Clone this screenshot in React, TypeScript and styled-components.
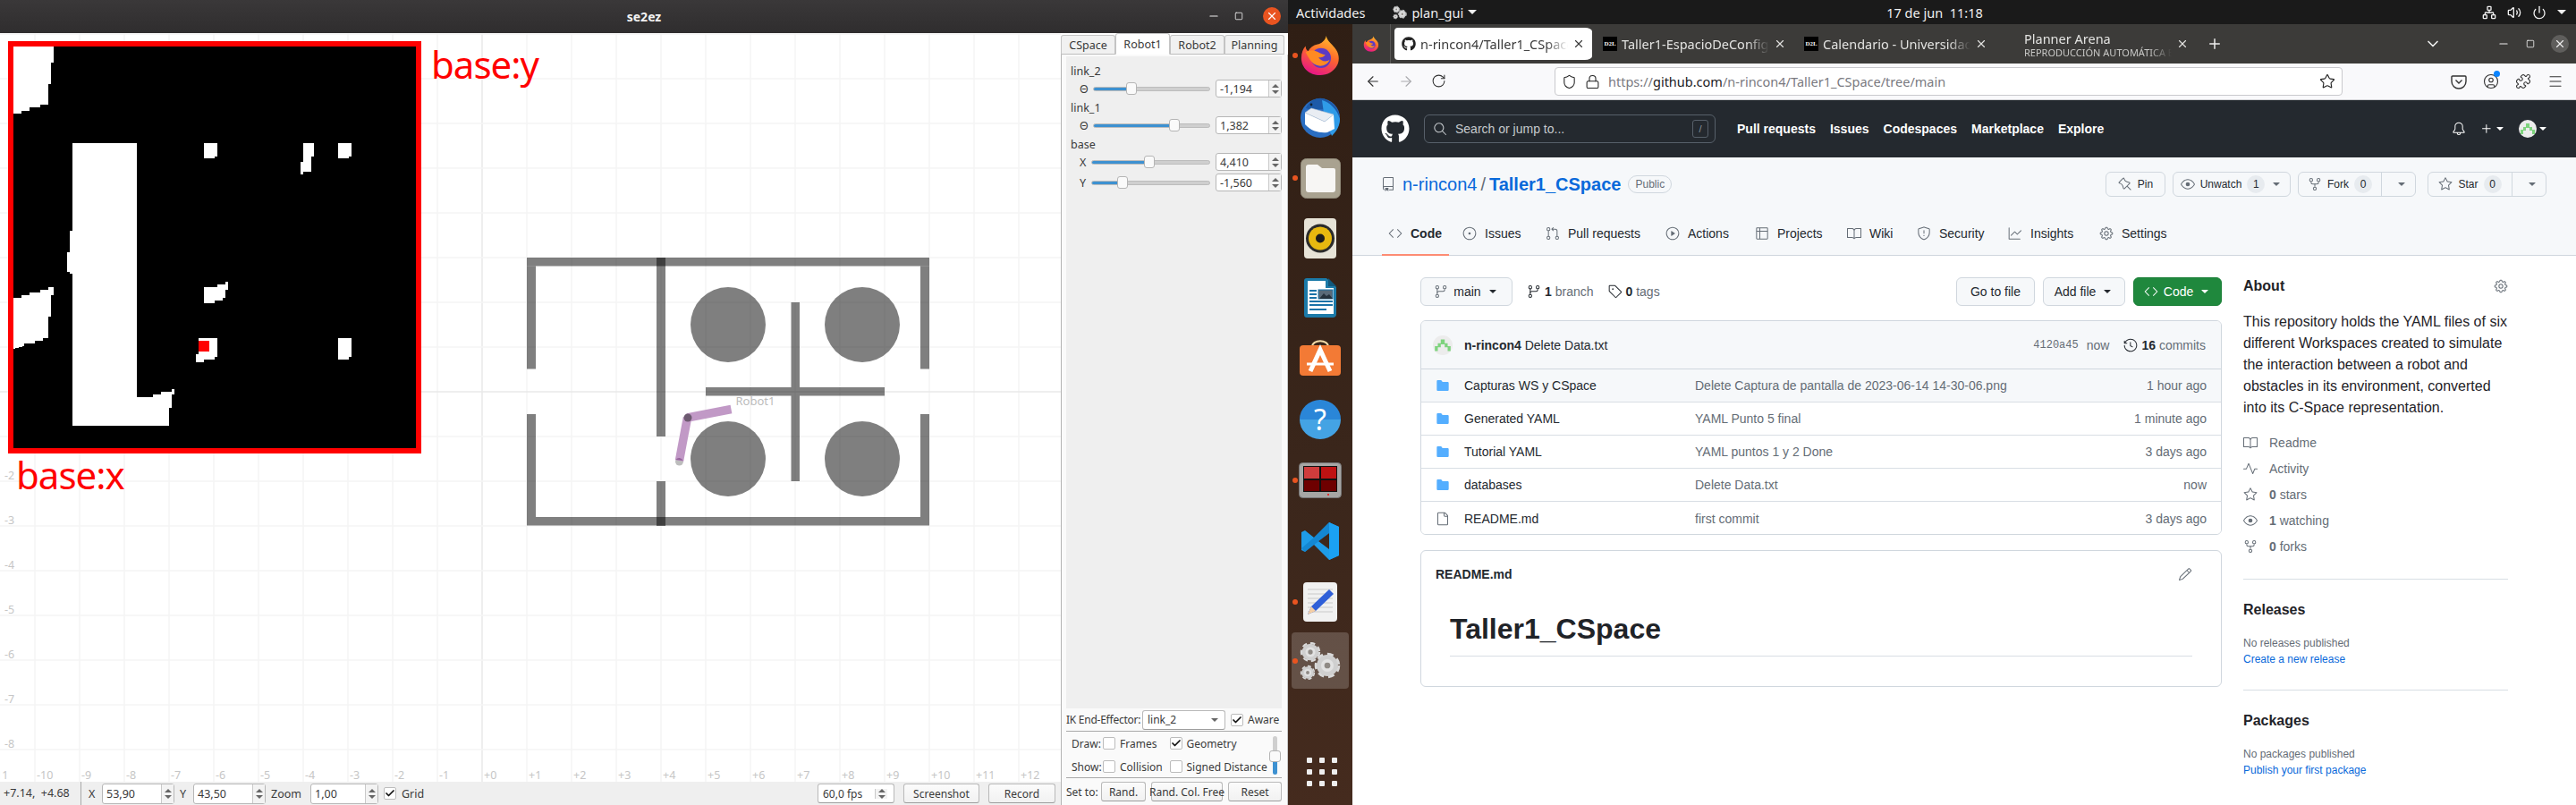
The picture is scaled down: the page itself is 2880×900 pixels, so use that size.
import React from "react";
import styled, { createGlobalStyle } from "styled-components";
import { FaGithub } from "react-icons/fa";
import {
  GoBell, GoBook, GoCode, GoEye, GoFile, GoFileDirectoryFill, GoGear, GoGitBranch, GoGitPullRequest,
  GoGraph, GoHistory, GoIssueOpened, GoPencil, GoPin, GoPlay, GoPlus, GoPulse, GoRepo,
  GoRepoForked, GoSearch, GoShield, GoStar, GoTable, GoTag, GoTriangleDown,
} from "react-icons/go";
import {
  ArrowLeft, ArrowRight, Check, ChevronDown, CircleUser, Lock, Menu, Minus, Network, Plus, Power, Puzzle,
  RotateCw, Shield, Square, Star, Volume2, X,
} from "lucide-react";

const UI = `"Noto Sans", "Open Sans", sans-serif`;
const GH = `"Liberation Sans", Arial, sans-serif`;

const Global = createGlobalStyle`
  * { box-sizing: border-box; }
  html, body { margin: 0; padding: 0; background: #fff; overflow: hidden; }
  #root { width: 2880px; height: 900px; }
`;

const Screen = styled.div`
  display: flex;
  width: 2880px;
  height: 900px;
  overflow: hidden;
`;

/* ---------- left window: se2ez ---------- */
const LeftWindow = styled.div`
  width: 1440px;
  height: 900px;
  display: flex;
  flex-direction: column;
  font-family: ${UI};
  color: #3a3a3a;
`;

const TitleBar = styled.div`
  position: relative;
  height: 37px;
  flex: none;
  display: flex;
  align-items: center;
  justify-content: center;
  background: linear-gradient(#3a3839, #2f2d2e);
  color: #f2f2f2;
  font-size: 14px;
  font-weight: 700;
`;

const WinButtons = styled.div`
  position: absolute;
  right: 8px;
  top: 8px;
  display: flex;
  align-items: center;
  gap: 16px;
  color: #eee;
`;

const CloseDot = styled.span`
  width: 20px;
  height: 20px;
  border-radius: 50%;
  background: #e95420;
  color: #fff;
  display: flex;
  align-items: center;
  justify-content: center;
  margin-left: 6px;
`;

const WindowBody = styled.div`
  flex: 1;
  display: flex;
  min-height: 0;
`;

const ViewColumn = styled.div`
  width: 1186px;
  flex: none;
  display: flex;
  flex-direction: column;
`;

const Canvas = styled.div`
  position: relative;
  height: 837px;
  background: #fff;
  overflow: hidden;
`;

const CanvasSvg = styled.svg`
  display: block;
  width: 1186px;
  height: 837px;
`;

const CSpaceFrame = styled.div`
  position: absolute;
  left: 9px;
  top: 9px;
  width: 462px;
  height: 461px;
  border: 6px solid #ff0000;
  background: #000;
`;

const CSpaceSvg = styled.svg`
  display: block;
  width: 450px;
  height: 449px;
`;

const AxisNote = styled.span<{ $x: number; $y: number }>`
  position: absolute;
  left: ${(p) => p.$x}px;
  top: ${(p) => p.$y}px;
  color: #ff0000;
  font-size: 42px;
  line-height: 48px;
  letter-spacing: -1px;
`;

const Toolbar = styled.div`
  height: 26px;
  flex: none;
  display: flex;
  align-items: center;
  gap: 6px;
  padding: 0 6px 0 4px;
  background: #efefef;
  font-size: 12.5px;
`;

const CoordText = styled.div`
  width: 87px;
  height: 26px;
  line-height: 25px;
  overflow: hidden;
  white-space: nowrap;
  border-right: 1px solid #a8a8a8;
  margin-right: 2px;
`;

const ToolLabel = styled.span<{ $w?: number }>`
  ${(p) => (p.$w ? `width: ${p.$w}px;` : "")}
  white-space: nowrap;
`;

const Spin = styled.div<{ $w: number; $h: number }>`
  width: ${(p) => p.$w}px;
  height: ${(p) => p.$h}px;
  flex: none;
  display: flex;
  background: #fff;
  border: 1px solid #b7b7b7;
  border-radius: 3px;
  font-size: 12.5px;
`;

const SpinValue = styled.div`
  flex: 1;
  display: flex;
  align-items: center;
  padding-left: 4px;
`;

const SpinArrows = styled.div`
  width: 14px;
  flex: none;
  display: flex;
  flex-direction: column;
  align-items: center;
  justify-content: center;
  gap: 3px;
  border-left: 1px solid #c9c9c9;
  background: #f3f3f3;
`;

const Arrow = styled.i<{ $down?: boolean }>`
  width: 0;
  height: 0;
  border-left: 4px solid transparent;
  border-right: 4px solid transparent;
  ${(p) => (p.$down ? "border-top: 4px solid #666;" : "border-bottom: 4px solid #666;")}
`;

const CheckBox = styled.span<{ $on?: boolean }>`
  width: 14px;
  height: 14px;
  flex: none;
  display: inline-flex;
  align-items: center;
  justify-content: center;
  background: #fff;
  border: 1px solid #bcbcbc;
  border-radius: 2px;
  color: #111;
`;

const ToolGroup = styled.div`
  margin-left: auto;
  display: flex;
  align-items: center;
  gap: 10px;
`;

const QtButton = styled.div<{ $w: number }>`
  width: ${(p) => p.$w}px;
  height: 22px;
  flex: none;
  display: flex;
  align-items: center;
  justify-content: center;
  white-space: nowrap;
  background: linear-gradient(#fbfbfb, #f1f1f1);
  border: 1px solid #b9b9b9;
  border-bottom-color: #9d9d9d;
  border-radius: 3px;
  font-size: 12px;
`;

const QtSelect = styled(QtButton)`
  justify-content: space-between;
  padding: 0 7px 0 5px;
  background: #fff;
`;

/* side panel */
const Panel = styled.div`
  width: 254px;
  flex: none;
  display: flex;
  flex-direction: column;
  background: #fafafa;
`;

const PanelTabs = styled.div`
  height: 24px;
  flex: none;
  display: flex;
  align-items: flex-end;
  background: #fff;
`;

const PanelTab = styled.div<{ $w: number; $on?: boolean }>`
  width: ${(p) => p.$w}px;
  height: ${(p) => (p.$on ? 24 : 22)}px;
  display: flex;
  align-items: center;
  justify-content: center;
  font-size: 12.5px;
  background: ${(p) => (p.$on ? "#fff" : "#f1f1f1")};
  border: 1px solid #c4c4c4;
  border-bottom-color: ${(p) => (p.$on ? "#fff" : "#bdbdbd")};
  border-radius: 3px 3px 0 0;
`;

const PanelBody = styled.div`
  flex: 1;
  display: flex;
  flex-direction: column;
  border-left: 1px solid #b4b4b4;
  border-right: 1px solid #c8c8c8;
  padding: 2px 6px 0 5px;
  font-size: 12px;
`;

const SliderArea = styled.div`
  height: 729px;
  flex: none;
  background: #efefef;
  padding-top: 7px;
  font-size: 12.5px;
`;

const GroupLabel = styled.div<{ $mt?: number }>`
  height: 19px;
  line-height: 19px;
  padding-left: 5px;
  margin-top: ${(p) => p.$mt ?? 0}px;
`;

const JointRow = styled.div<{ $mt?: number }>`
  display: flex;
  align-items: center;
  height: 20px;
  margin-top: ${(p) => p.$mt ?? 0}px;
`;

const AxisLabel = styled.span<{ $w: number }>`
  width: ${(p) => p.$w}px;
  flex: none;
  padding-left: 15px;
`;

const Track = styled.div`
  position: relative;
  flex: 1;
  height: 5px;
  margin-right: 6px;
  background: #cfcfcf;
  border: 1px solid #bcbcbc;
  border-radius: 3px;
`;

const TrackFill = styled.div`
  height: 100%;
  background: #3d91d1;
  border-radius: 3px 0 0 3px;
`;

const Thumb = styled.div`
  position: absolute;
  top: -6px;
  width: 12px;
  height: 14px;
  margin-left: -6px;
  background: #fafafa;
  border: 1px solid #b5b5b5;
  border-radius: 3px;
`;

const IkRow = styled.div`
  height: 26px;
  flex: none;
  display: flex;
  align-items: center;
  gap: 6px;
  border-bottom: 1px solid #a9a9a9;
`;

const IkLabel = styled.span`
  width: 79px;
  white-space: nowrap;
  letter-spacing: -0.25px;
`;

const DrawPart = styled.div`
  height: 52px;
  flex: none;
  display: flex;
  border-bottom: 1px solid #a9a9a9;
`;

const DrawGrid = styled.div`
  flex: 1;
  display: grid;
  grid-template-columns: 35px 74.5px 1fr;
  grid-auto-rows: 26px;
  align-items: center;
  padding-left: 6px;
`;

const CheckField = styled.label`
  display: flex;
  align-items: center;
  gap: 5px;
  white-space: nowrap;
`;

const VSlider = styled.div`
  position: relative;
  width: 13px;
  flex: none;
  margin: 5px 1px 3px 0;
  display: flex;
  justify-content: center;
`;

const VTrack = styled.div`
  width: 5px;
  height: 100%;
  background: linear-gradient(#cfcfcf 0 40%, #3d91d1 40%);
  border-radius: 3px;
`;

const VThumb = styled.div`
  position: absolute;
  top: 16px;
  left: 0;
  width: 13px;
  height: 13px;
  background: #fafafa;
  border: 1px solid #b5b5b5;
  border-radius: 3px;
`;

const SetRow = styled.div`
  flex: 1;
  display: flex;
  align-items: center;
  gap: 6px;
`;

const SetLabel = styled.span`
  width: 33px;
  white-space: nowrap;
`;

/* ---------- right: desktop ---------- */
const Desktop = styled.div`
  width: 1440px;
  height: 900px;
  display: flex;
  flex-direction: column;
`;

const TopBar = styled.div`
  height: 27px;
  flex: none;
  display: grid;
  grid-template-columns: 1fr auto 1fr;
  align-items: center;
  padding: 0 11px 0 9px;
  background: #1a1a1a;
  color: #f0f0f0;
  font: 14.5px ${UI};
`;

const TopLeft = styled.div`
  display: flex;
  align-items: center;
  gap: 4px;
`;

const TopApp = styled.div`
  display: flex;
  align-items: center;
  gap: 5px;
  margin-left: 27px;
`;

const TopCaret = styled.i`
  width: 0;
  height: 0;
  border-left: 5px solid transparent;
  border-right: 5px solid transparent;
  border-top: 5px solid #f0f0f0;
`;

const TopClock = styled.div`
  margin-left: 8px;
`;

const TopRight = styled.div`
  display: flex;
  align-items: center;
  justify-content: flex-end;
  gap: 12px;
`;

const DesktopBody = styled.div`
  flex: 1;
  display: flex;
  min-height: 0;
`;

const Dock = styled.div`
  position: relative;
  width: 72px;
  flex: none;
  display: flex;
  flex-direction: column;
  align-items: center;
  background: linear-gradient(170deg, #2f1e14, #3a261b 55%, #452b1e);
`;

const DockSlot = styled.div<{ $h: number; $active?: boolean; $running?: boolean }>`
  position: relative;
  width: 64px;
  height: ${(p) => p.$h}px;
  flex: none;
  display: flex;
  align-items: center;
  justify-content: center;
  border-radius: 4px;
  background: ${(p) => (p.$active ? "rgba(255,255,255,.19)" : "transparent")};

  &::before {
    content: "";
    display: ${(p) => (p.$running ? "block" : "none")};
    position: absolute;
    left: 1px;
    top: calc(50% - 3px);
    width: 6px;
    height: 6px;
    border-radius: 50%;
    background: #e95420;
  }
`;

const AppGrid = styled.div`
  position: absolute;
  bottom: 21px;
  left: 21px;
  display: grid;
  grid-template-columns: repeat(3, 6px);
  grid-auto-rows: 6px;
  gap: 7px 8px;

  i {
    background: #eee;
    border-radius: 1px;
  }
`;

const Browser = styled.div`
  flex: 1;
  display: flex;
  flex-direction: column;
  min-width: 0;
  background: #fff;
  font-family: ${GH};
`;

const TabStrip = styled.div`
  height: 44px;
  flex: none;
  display: flex;
  align-items: stretch;
  background: #3c3b39;
  color: #e2e2e0;
  font-family: ${UI};
`;

const FoxCell = styled.div`
  width: 43px;
  flex: none;
  display: flex;
  align-items: center;
  justify-content: center;
  border-right: 1px solid #5a5957;
`;

const Tab = styled.div<{ $on?: boolean }>`
  width: 225px;
  flex: none;
  display: flex;
  align-items: center;
  gap: 5px;
  padding: 0 8px 0 8px;
  border: solid transparent;
  border-width: 4px 0 4px 4px;
  background-clip: padding-box;
  background-color: ${(p) => (p.$on ? "#fff" : "transparent")};
  color: ${(p) => (p.$on ? "#3a3a3a" : "#e2e2e0")};
  border-radius: 8px;
  font-size: 14.5px;
`;

const TabIcon = styled.span`
  width: 16px;
  height: 16px;
  flex: none;
  display: flex;
  align-items: center;
  justify-content: center;
`;

const D2L = styled.span`
  width: 16px;
  height: 16px;
  background: #000;
  color: #fff;
  font: 700 7px "Liberation Serif", serif;
  line-height: 16px;
  text-align: center;
  white-space: nowrap;
  overflow: hidden;
`;

const TabTitle = styled.div`
  flex: 1;
  min-width: 0;
  white-space: nowrap;
  overflow: hidden;
  mask-image: linear-gradient(to right, #000 85%, transparent);
`;

const TabSub = styled.div`
  font-size: 11px;
  line-height: 13px;
  color: #c8c8c6;
`;

const TabMain = styled.div`
  line-height: 18px;
`;

const StripRight = styled.div`
  flex: 1;
  display: flex;
  align-items: center;
  padding-left: 12px;
  color: #eee;
`;

const StripControls = styled.div`
  margin-left: auto;
  display: flex;
  align-items: center;
  padding-right: 8px;
  gap: 18px;
`;

const Chevron = styled.span`
  display: flex;
  margin-right: 44px;
`;

const BrowserClose = styled.span`
  width: 20px;
  height: 20px;
  border-radius: 50%;
  background: #5f5e5c;
  display: flex;
  align-items: center;
  justify-content: center;
`;

const NavBar = styled.div`
  height: 41px;
  flex: none;
  display: flex;
  align-items: center;
  padding-left: 14px;
  background: #f9f9fb;
  border-bottom: 1px solid #cfcfd3;
  color: #333;
`;

const NavIcon = styled.span<{ $faded?: boolean }>`
  position: relative;
  width: 18px;
  height: 18px;
  display: flex;
  color: ${(p) => (p.$faded ? "#a9a9ad" : "#333")};
`;

const NavButtons = styled.div`
  display: flex;
  gap: 19px;
`;

const AddressBar = styled.div`
  width: 881px;
  height: 32px;
  margin-left: 120px;
  display: flex;
  align-items: center;
  gap: 9px;
  padding: 0 7px 0 7px;
  background: #fff;
  border: 1px solid #c9c9cd;
  border-radius: 4px;
  font: 14.5px ${UI};
  color: #7a7a7f;
`;

const UrlText = styled.div`
  flex: 1;
  white-space: nowrap;
  b {
    font-weight: 400;
    color: #1b1b1d;
  }
`;

const NavRight = styled(NavButtons)`
  margin-left: 121px;
  gap: 18px;
`;

const BlueBadge = styled.span`
  position: absolute;
  right: -1px;
  top: -3px;
  width: 7px;
  height: 7px;
  border-radius: 50%;
  background: #0a84ff;
`;

const GhHeader = styled.div`
  height: 64px;
  flex: none;
  display: flex;
  align-items: center;
  padding: 0 30px 0 32px;
  background: #24292f;
  color: #fff;
  font-size: 14px;
`;

const SearchBox = styled.div`
  width: 326px;
  height: 32px;
  margin-left: 16px;
  display: flex;
  align-items: center;
  gap: 9px;
  padding: 0 7px 0 9px;
  border: 1px solid #57606a;
  border-radius: 6px;
  color: #c5c9cd;
`;

const SearchText = styled.span`
  flex: 1;
`;

const SlashKey = styled.span`
  width: 18px;
  height: 20px;
  display: flex;
  align-items: center;
  justify-content: center;
  border: 1px solid #57606a;
  border-radius: 3px;
  font-size: 11px;
  color: #8b949e;
`;

const GhLinks = styled.nav`
  display: flex;
  gap: 16px;
  margin-left: 24px;
  font-weight: 700;
`;

const GhRight = styled.div`
  margin-left: auto;
  display: flex;
  align-items: center;
`;

const HeaderPlus = styled.span`
  display: flex;
  align-items: center;
  margin: 0 0 0 15px;
`;

const HeaderAvatar = styled.span`
  display: flex;
  align-items: center;
  margin-left: 14px;
`;

const RepoHead = styled.div`
  height: 110px;
  flex: none;
  padding: 16px 33px 0 32px;
  background: #f6f8fa;
  border-bottom: 1px solid #d0d7de;
`;

const RepoTitle = styled.div`
  display: flex;
  align-items: center;
  height: 28px;
  font-size: 20px;
  color: #0969da;
`;

const RepoBook = styled.span`
  display: flex;
  color: #656d76;
  margin-right: 8px;
`;

const Slash = styled.span`
  color: #656d76;
  margin: 0 4px;
`;

const PublicBadge = styled.span`
  margin-left: 8px;
  padding: 0 7px;
  height: 20px;
  line-height: 18px;
  border: 1px solid #d0d7de;
  border-radius: 10px;
  font-size: 12px;
  color: #656d76;
`;

const RepoActions = styled.div`
  margin-left: auto;
  display: flex;
  gap: 8px;
  color: #24292f;
  font-size: 12px;
`;

const ActionBtn = styled.div<{ $w: number; $ml?: number }>`
  width: ${(p) => p.$w}px;
  height: 28px;
  margin-left: ${(p) => p.$ml ?? 0}px;
  display: flex;
  align-items: center;
  justify-content: center;
  gap: 6px;
  background: #f6f8fa;
  border: 1px solid #d0d7de;
  border-radius: 6px;
  color: #24292f;

  svg {
    color: #656d76;
  }
`;

const SplitMain = styled.div`
  flex: 1;
  display: flex;
  align-items: center;
  justify-content: center;
  gap: 6px;
  height: 100%;
  border-right: 1px solid #d0d7de;
`;

const SplitCaret = styled.div`
  width: 31px;
  display: flex;
  align-items: center;
  justify-content: center;
`;

const Counter = styled.span`
  min-width: 20px;
  height: 20px;
  padding: 0 6px;
  display: inline-flex;
  align-items: center;
  justify-content: center;
  border-radius: 10px;
  background: #e7ebef;
`;

const RepoTabs = styled.nav`
  display: flex;
  margin: 17px 0 0 0;
  height: 48px;
  color: #24292f;
  font-size: 14px;
`;

const RepoTab = styled.div<{ $w: number; $on?: boolean }>`
  position: relative;
  width: ${(p) => p.$w}px;
  flex: none;
  display: flex;
  align-items: center;
  gap: 9px;
  padding-left: 8px;
  font-weight: ${(p) => (p.$on ? 700 : 400)};

  svg {
    color: #656d76;
  }

  &::after {
    content: "";
    display: ${(p) => (p.$on ? "block" : "none")};
    position: absolute;
    left: 1px;
    bottom: -1px;
    width: 75px;
    height: 2px;
    background: #fd8c73;
  }
`;

const RepoBody = styled.div`
  flex: 1;
  display: flex;
  padding: 24px 0 0 76px;
  color: #24292f;
  font-size: 14px;
`;

const MainCol = styled.div`
  width: 896px;
  flex: none;
`;

const FileNav = styled.div`
  display: flex;
  align-items: center;
  height: 32px;
`;

const NavBtn = styled.div<{ $w: number; $green?: boolean }>`
  width: ${(p) => p.$w}px;
  height: 32px;
  flex: none;
  display: flex;
  align-items: center;
  justify-content: center;
  gap: 6px;
  border: 1px solid ${(p) => (p.$green ? "#1a7f37" : "#d0d7de")};
  border-radius: 6px;
  background: ${(p) => (p.$green ? "#1f883d" : "#f6f8fa")};
  color: ${(p) => (p.$green ? "#fff" : "#24292f")};
  font-weight: 400;
`;

const MutedIcon = styled.span`
  display: flex;
  color: #656d76;
`;

const NavCount = styled.span<{ $ml: number }>`
  display: flex;
  align-items: center;
  gap: 4px;
  margin-left: ${(p) => p.$ml}px;
  color: #656d76;

  b {
    color: #24292f;
  }
  svg {
    color: #24292f;
  }
`;

const NavEnd = styled.div`
  margin-left: auto;
  display: flex;
  gap: 9px;
`;

const FileBox = styled.div`
  margin-top: 16px;
  height: 240px;
  border: 1px solid #d0d7de;
  border-radius: 6px;
  overflow: hidden;
`;

const CommitRow = styled.div`
  height: 54px;
  display: flex;
  align-items: center;
  padding: 0 17px 0 13px;
  background: #f6f8fa;
  border-bottom: 1px solid #d0d7de;
`;

const CommitText = styled.div`
  margin-left: 13px;
  b {
    font-weight: 700;
  }
`;

const CommitMeta = styled.div`
  margin-left: auto;
  display: flex;
  align-items: center;
  color: #656d76;
  font: 12px "Liberation Mono", monospace;
`;

const CommitSum = styled.span`
  margin-left: 9px;
  font: 14px ${GH};
`;

const Commits = styled.span`
  display: flex;
  align-items: center;
  gap: 4px;
  margin-left: 16px;
  font: 14px ${GH};

  b {
    color: #24292f;
  }
  svg {
    color: #24292f;
  }
`;

const FileRow = styled.div<{ $hover?: boolean }>`
  height: 37px;
  display: flex;
  align-items: center;
  padding: 0 16px;
  background: ${(p) => (p.$hover ? "#f6f8fa" : "#fff")};
  border-bottom: 1px solid #d8dee4;

  &:last-child {
    border-bottom: 0;
  }
`;

const FileIcon = styled.span<{ $dir?: boolean }>`
  width: 32px;
  flex: none;
  display: flex;
  color: ${(p) => (p.$dir ? "#54aeff" : "#656d76")};
`;

const FileName = styled.span`
  width: 258px;
  flex: none;
`;

const FileMsg = styled.span`
  flex: 1;
  color: #656d76;
`;

const FileAge = styled.span`
  color: #656d76;
`;

const ReadmeBox = styled.div`
  margin-top: 17px;
  height: 153px;
  padding: 0 32px;
  border: 1px solid #d0d7de;
  border-radius: 6px;
`;

const ReadmeHead = styled.div`
  height: 52px;
  display: flex;
  align-items: center;
  justify-content: space-between;
  margin: 0 0 0 -16px;
  font-weight: 700;

  svg {
    color: #656d76;
  }
`;

const ReadmeTitle = styled.h1`
  margin: 14px 0 0;
  height: 52px;
  line-height: 42px;
  font-size: 32px;
  font-weight: 700;
  color: #1f2328;
  border-bottom: 1px solid #d8dee4;
`;

const SideCol = styled.aside`
  width: 296px;
  flex: none;
  margin-left: 24px;
`;

const SideHeadRow = styled.div`
  display: flex;
  justify-content: space-between;
  align-items: center;
  color: #656d76;
`;

const SideTitle = styled.h2<{ $mt?: number }>`
  margin: ${(p) => p.$mt ?? 0}px 0 0;
  font-size: 16px;
  line-height: 20px;
  font-weight: 700;
  color: #1f2328;
`;

const AboutText = styled.p`
  margin: 18px 0 0;
  font-size: 16px;
  line-height: 24px;
  color: #1f2328;
`;

const MetaList = styled.div`
  margin-top: 12.5px;
  color: #656d76;
`;

const MetaRow = styled.div`
  height: 29px;
  display: flex;
  align-items: center;
  gap: 13px;

  b {
    font-weight: 700;
  }
`;

const MetaIcon = styled.span`
  width: 16px;
  display: flex;
`;

const SideRule = styled.hr<{ $mt: number }>`
  margin: ${(p) => p.$mt}px 0 0;
  border: 0;
  border-top: 1px solid #d8dee4;
`;

const SideNote = styled.div<{ $mt?: number }>`
  margin-top: ${(p) => p.$mt ?? 0}px;
  font-size: 12px;
  line-height: 16px;
  color: #656d76;
`;

const SideLink = styled.div`
  margin-top: 1px;
  font-size: 12px;
  line-height: 18px;
  color: #0969da;
`;

/* ---------- drawings ---------- */
const Firefox = ({ size = 46 }: { size?: number }) => (
  <svg width={size} height={size} viewBox="0 0 48 48">
    <defs>
      <linearGradient id={`ff${size}`} x1="0.7" y1="0" x2="0.3" y2="1">
        <stop offset="0" stopColor="#ffbd2e" />
        <stop offset="0.45" stopColor="#ff6a2b" />
        <stop offset="1" stopColor="#e5128a" />
      </linearGradient>
    </defs>
    <path d="M31 1c1 6 6 9 10 14 5 6 6 14 3 20-4 8-12 12-20 12C11 47 2 38 2 27c0-6 2-11 5-14 0 3 1 5 3 6 2-4 6-7 11-8 4-1 9-4 10-10z" fill={`url(#ff${size})`} />
    <circle cx="25" cy="27" r="11.5" fill="#5b3bc4" />
    <path d="M7 20c4-2 8-3 12-1 4 1 6 4 11 4-2 3-5 4-8 3 3 5 9 6 13 3-2 6-10 9-16 6-6-3-9-9-12-15z" fill="#ff8a22" />
  </svg>
);

const Thunderbird = () => (
  <svg width="48" height="48" viewBox="0 0 48 48">
    <circle cx="24" cy="25" r="22" fill="#2a6ec2" />
    <path d="M8 14C12 4 24 0 32 5c8 4 14 13 14 20-6-6-14-10-22-10-6 0-11 1-16-1z" fill="#1d5aa8" />
    <path d="M26 5c8 2 17 10 20 21 0 8-4 14-9 19-1-3-3-8-7-11z" fill="#2f9be8" />
    <path d="M7 19l22 10 10-8 1 16-8 4c-8 1-18-1-25-9z" fill="#fff" />
    <path d="M7 19l7-5 25 7-10 8z" fill="#e9edf3" stroke="#b8c4d4" strokeWidth="0.6" />
    <circle cx="14" cy="10" r="1.4" fill="#123" />
  </svg>
);

const FilesIcon = () => (
  <svg width="45" height="45" viewBox="0 0 45 45">
    <rect x="0.5" y="0.5" width="44" height="44" rx="6" fill="#a9a290" stroke="#8f8978" />
    <path d="M6 10a3 3 0 0 1 3-3h10l5 4h13a2 2 0 0 1 2 2v22a3 3 0 0 1-3 3H9a3 3 0 0 1-3-3z" fill="#f7f6f4" />
  </svg>
);

const SpeakerIcon = () => (
  <svg width="36" height="45" viewBox="0 0 36 45">
    <rect x="0" y="0" width="36" height="45" rx="4" fill="#e7e3d7" />
    <circle cx="18" cy="22.5" r="16" fill="#2b2b2b" />
    <circle cx="18" cy="22.5" r="13" fill="#e7b80f" />
    <circle cx="18" cy="22.5" r="5" fill="#1c1c1c" />
  </svg>
);

const WriterIcon = () => (
  <svg width="38" height="46" viewBox="0 0 38 46">
    <path d="M4 1h22l11 10v30a4 4 0 0 1-4 4H4a3 3 0 0 1-3-3V4a3 3 0 0 1 3-3z" fill="#1b7aa8" />
    <path d="M5 4h20v8h9v29H5z" fill="#fff" />
    <path d="M28 1l9 9h-9z" fill="#11587c" />
    <path d="M7 15h8M7 19h8M7 23h8M7 27h26M7 31h26M7 36h19" stroke="#1a73a8" strokeWidth="2" />
    <rect x="17" y="14" width="16" height="10" fill="#5a6a78" stroke="#1a73a8" />
    <path d="M18 24l5-6 3 3 3-2 4 5z" fill="#26323c" />
  </svg>
);

const StoreIcon = () => (
  <svg width="46" height="40" viewBox="0 0 46 40">
    <path d="M14 8c0-9 18-9 18 0" fill="none" stroke="#f1d9a6" strokeWidth="2" />
    <rect x="0" y="6" width="46" height="34" rx="4" fill="#f37a35" />
    <path d="M12 35L23 11l11 24" fill="none" stroke="#fff" strokeWidth="5" />
    <path d="M8 27h30" stroke="#fff" strokeWidth="3" />
  </svg>
);

const HelpCircle = styled.div`
  width: 46px;
  height: 44px;
  border-radius: 50%;
  background: linear-gradient(#2a86d8 50%, #44a3e4 50%);
  color: #fff;
  font: 32px ${UI};
  line-height: 44px;
  text-align: center;
`;

const MonitorIcon = () => (
  <svg width="48" height="40" viewBox="0 0 48 40">
    <rect x="0.5" y="0.5" width="47" height="39" rx="4" fill="#a6a6a4" stroke="#777" />
    <rect x="5" y="4" width="38" height="29" fill="#111" />
    <rect x="6" y="5" width="17" height="13" fill="#cf3c3c" />
    <rect x="25" y="5" width="17" height="13" fill="#bf1212" />
    <rect x="6" y="20" width="17" height="12" fill="#6e0000" />
    <rect x="25" y="20" width="17" height="12" fill="#6e0000" />
    <rect x="32" y="35" width="2" height="2" fill="#d33" />
  </svg>
);

const VsCodeIcon = () => (
  <svg width="44" height="44" viewBox="0 0 44 44">
    <path d="M32 1L15 18 5 10 1 12v20l4 2 10-8 17 17 11-5V6zM32 13v18L20 22z" fill="#1e9ce8" fillRule="evenodd" />
    <path d="M32 1l11 5v32l-11 5z" fill="#1ba1f2" />
    <path d="M1 30l4 4L32 13V1L15 18z" fill="#0c77bf" opacity=".55" />
  </svg>
);

const EditorIcon = () => (
  <svg width="38" height="44" viewBox="0 0 38 44">
    <rect x="0" y="0" width="38" height="44" rx="4" fill="#f1f1f1" />
    <path d="M5 8h28M5 13h28M5 18h28M5 23h28M5 28h28M5 33h28" stroke="#c9c9c9" strokeWidth="1" />
    <path d="M5 36l4-9 20-19 5 5-20 19z" fill="#2f5fd8" />
    <path d="M5 36l4-9 5 5z" fill="#f5cfa5" />
  </svg>
);

const Gear = ({ x, y, r }: { x: number; y: number; r: number }) => (
  <g>
    <circle cx={x} cy={y} r={r * 0.85} fill="#cfcfcf" />
    <circle cx={x} cy={y} r={r * 0.92} fill="none" stroke="#d9d9d9" strokeWidth={r * 0.2} strokeDasharray={`${r * 0.5} ${r * 0.36}`} />
    <circle cx={x} cy={y} r={r * 0.5} fill="#e2e2e2" />
    <circle cx={x} cy={y} r={r * 0.24} fill="#8f8a85" />
  </g>
);

const GearsIcon = ({ size = 46, h = 42 }: { size?: number; h?: number }) => (
  <svg width={size} height={h} viewBox="0 0 46 42">
    <Gear x={12} y={11} r={11} />
    <Gear x={31} y={26} r={14} />
    <Gear x={9} y={34} r={8} />
  </svg>
);

const Identicon = ({ size }: { size: number }) => (
  <svg width={size} height={size} viewBox="0 0 20 20">
    <circle cx="10" cy="10" r="10" fill="#ececec" />
    <path d="M8 4h4v4h3v3h3v5h-3v-4h-3V9H8v3H5v4H2v-5h3V8h3z" fill="#7ed37e" />
  </svg>
);

const PocketIcon = () => (
  <svg width="18" height="18" viewBox="0 0 18 18" fill="none" stroke="#333" strokeWidth="1.4">
    <path d="M2 3h14a1 1 0 0 1 1 1v5a8 8 0 0 1-16 0V4a1 1 0 0 1 1-1z" />
    <path d="M5.5 7.5L9 11l3.5-3.5" />
  </svg>
);

/* ---------- data ---------- */
const gridX = Array.from({ length: 24 }, (_, i) => 539 + (i - 11) * 50);
const gridY = Array.from({ length: 18 }, (_, i) => 438 + (i - 8) * 50);

const Walls = () => (
  <g fill="#000" fillOpacity="0.5">
    <rect x="589" y="288" width="450" height="9.5" />
    <rect x="589" y="578" width="450" height="9.5" />
    <rect x="589" y="297.5" width="10" height="115" />
    <rect x="589" y="463" width="10" height="115" />
    <rect x="1029" y="297.5" width="10" height="115" />
    <rect x="1029" y="463" width="10" height="115" />
    <rect x="734" y="288" width="10" height="200" />
    <rect x="734" y="538" width="10" height="50" />
    <path d="M884.5 338h9.5v95h95v9.5h-95V538h-9.5v-95.5H789V433h95.500z" />
    <circle cx="814" cy="363" r="42" />
    <circle cx="964" cy="363" r="42" />
    <circle cx="814" cy="513" r="42" />
    <circle cx="964" cy="513" r="42" />
  </g>
);

const CSPACE_SHAPES = [
  "37,146 147,146 147,196 140,196 140,263 132,263 132,329 110,329 110,338 81,338 81,347 59,347 59,356 37,356",
  "198,448 375,448 375,1246 419,1246 419,1238 441,1238 441,1229 470,1229 470,1221 478,1221 478,1238 470,1238 470,1280 463,1280 463,1337 198,1337 198,860 191,860 191,852 184,852 184,792 191,792 191,725 198,725",
  "559,448 595,448 595,490 588,490 588,498 559,498",
  "831,448 860,448 860,490 853,490 853,540 831,540 831,548 823,548 823,507 831,507",
  "926,448 963,448 963,490 955,490 955,498 926,498",
  "37,935 59,935 59,927 81,927 81,918 110,918 110,910 132,910 132,902 147,902 147,927 140,927 140,993 132,993 132,1060 118,1060 118,1069 96,1069 96,1078 66,1078 66,1086 37,1095",
  "559,902 595,902 595,893 617,893 617,885 625,885 625,910 617,910 617,935 610,935 610,943 588,943 588,951 559,951",
  "544,1061 595,1061 595,1120 588,1120 588,1128 559,1128 559,1137 537,1137 537,1112 544,1112",
  "926,1061 963,1061 963,1120 955,1120 955,1128 926,1128",
];

const joints = [
  { label: "link_2", axis: "Θ", value: "-1,194", pct: 32.5, w: 30 },
  { label: "link_1", axis: "Θ", value: "1,382", pct: 70, w: 30 },
  { label: "base", axis: "X", value: "4,410", pct: 49, w: 28 },
  { label: "", axis: "Y", value: "-1,560", pct: 26, w: 28 },
];

const files = [
  { name: "Capturas WS y CSpace", msg: "Delete Captura de pantalla de 2023-06-14 14-30-06.png", age: "1 hour ago", dir: true },
  { name: "Generated YAML", msg: "YAML Punto 5 final", age: "1 minute ago", dir: true },
  { name: "Tutorial YAML", msg: "YAML puntos 1 y 2 Done", age: "3 days ago", dir: true },
  { name: "databases", msg: "Delete Data.txt", age: "now", dir: true },
  { name: "README.md", msg: "first commit", age: "3 days ago", dir: false },
];

const SpinBox = ({ w, h, value }: { w: number; h: number; value: string }) => (
  <Spin $w={w} $h={h}>
    <SpinValue>{value}</SpinValue>
    <SpinArrows>
      <Arrow />
      <Arrow $down />
    </SpinArrows>
  </Spin>
);

const Tick = () => <Check size={12} strokeWidth={3.5} />;

const App = () => (
  <Screen>
    <Global />
    <LeftWindow>
      <TitleBar>
        se2ez
        <WinButtons>
          <Minus size={14} />
          <Square size={10} />
          <CloseDot><X size={14} /></CloseDot>
        </WinButtons>
      </TitleBar>
      <WindowBody>
        <ViewColumn>
          <Canvas>
            <CanvasSvg viewBox="0 37 1186 837">
              {gridX.map((x) => (
                <line key={x} x1={x} x2={x} y1={37} y2={874} stroke={x === 539 ? "#e8e8e8" : "#f4f4f4"} strokeWidth="1.5" />
              ))}
              {gridY.map((y) => (
                <line key={y} x1={0} x2={1186} y1={y} y2={y} stroke={y === 438 ? "#e8e8e8" : "#f4f4f4"} strokeWidth="1.5" />
              ))}
              {gridX.map((x, i) => {
                const n = i - 11;
                return (
                  <text key={x} x={x + 2} y={871} fontFamily={UI} fontSize="12.5" fill="#c6c6c6">
                    {n < 0 ? n : `+${n}`}
                  </text>
                );
              })}
              {gridY.slice(10).map((y, i) => (
                <text key={y} x={5} y={y - 2} fontFamily={UI} fontSize="12.5" fill="#c6c6c6">
                  {-(i + 2)}
                </text>
              ))}
              <Walls />
              <circle cx="759.5" cy="516" r="4.5" fill="#bdbdbd" />
              <g stroke="#c199c6" strokeWidth="9.5" fill="none">
                <line x1="768.5" y1="467" x2="759.5" y2="515" />
                <line x1="768.5" y1="467" x2="817.5" y2="457.5" />
              </g>
              <circle cx="769" cy="467" r="4.5" fill="#6d5a70" />
              <path d="M755.5 514a4.500 4.500 0 0 1 8 1z" fill="#95629b" />
              <text x="822.5" y="453" fontFamily={UI} fontSize="13" fill="#bcbcbc">Robot1</text>
            </CanvasSvg>
            <CSpaceFrame>
              <CSpaceSvg viewBox="37 146 1103 1260" preserveAspectRatio="none" shapeRendering="crispEdges">
                {CSPACE_SHAPES.map((points) => (
                  <polygon key={points} points={points} fill="#fff" />
                ))}
                <rect x="544" y="1070" width="29" height="33" fill="#ff0000" />
              </CSpaceSvg>
            </CSpaceFrame>
            <AxisNote $x={482} $y={11}>base:y</AxisNote>
            <AxisNote $x={18} $y={470}>base:x</AxisNote>
          </Canvas>
          <Toolbar>
            <CoordText>+7.14, &nbsp;+4.68</CoordText>
            <ToolLabel $w={9}>X</ToolLabel>
            <SpinBox w={81} h={23} value="53,90" />
            <ToolLabel $w={9}>Y</ToolLabel>
            <SpinBox w={81} h={23} value="43,50" />
            <ToolLabel $w={38}>Zoom</ToolLabel>
            <SpinBox w={76} h={23} value="1,00" />
            <CheckBox $on><Tick /></CheckBox>
            <ToolLabel>Grid</ToolLabel>
            <ToolGroup>
              <QtSelect $w={86}>
                60,0 fps
                <SpinArrows><Arrow /><Arrow $down /></SpinArrows>
              </QtSelect>
              <QtButton $w={85}>Screenshot</QtButton>
              <QtButton $w={75}>Record</QtButton>
            </ToolGroup>
          </Toolbar>
        </ViewColumn>
        <Panel>
          <PanelTabs>
            <PanelTab $w={61}>CSpace</PanelTab>
            <PanelTab $w={61} $on>Robot1</PanelTab>
            <PanelTab $w={61}>Robot2</PanelTab>
            <PanelTab $w={67}>Planning</PanelTab>
          </PanelTabs>
          <PanelBody>
            <SliderArea>
              {joints.map((j, i) => (
                <React.Fragment key={j.axis + i}>
                  {j.label && <GroupLabel $mt={i ? 2 : 0}>{j.label}</GroupLabel>}
                  <JointRow $mt={j.label ? 0 : 3}>
                    <AxisLabel $w={j.w}>{j.axis}</AxisLabel>
                    <Track>
                      <TrackFill style={{ width: `${j.pct}%` }} />
                      <Thumb style={{ left: `${j.pct}%` }} />
                    </Track>
                    <SpinBox w={74} h={20} value={j.value} />
                  </JointRow>
                </React.Fragment>
              ))}
            </SliderArea>
            <IkRow>
              <IkLabel>IK End-Effector:</IkLabel>
              <QtSelect $w={93}>
                link_2
                <Arrow $down />
              </QtSelect>
              <CheckField>
                <CheckBox $on><Tick /></CheckBox>
                Aware
              </CheckField>
            </IkRow>
            <DrawPart>
              <DrawGrid>
                <span>Draw:</span>
                <CheckField><CheckBox />Frames</CheckField>
                <CheckField><CheckBox $on><Tick /></CheckBox>Geometry</CheckField>
                <span>Show:</span>
                <CheckField><CheckBox />Collision</CheckField>
                <CheckField><CheckBox />Signed Distance</CheckField>
              </DrawGrid>
              <VSlider>
                <VTrack />
                <VThumb />
              </VSlider>
            </DrawPart>
            <SetRow>
              <SetLabel>Set to:</SetLabel>
              <QtButton $w={50}>Rand.</QtButton>
              <QtButton $w={80}>Rand. Col. Free</QtButton>
              <QtButton $w={60}>Reset</QtButton>
            </SetRow>
          </PanelBody>
        </Panel>
      </WindowBody>
    </LeftWindow>

    <Desktop>
      <TopBar>
        <TopLeft>
          Actividades
          <TopApp>
            <GearsIcon size={16} h={16} />
            plan_gui
            <TopCaret />
          </TopApp>
        </TopLeft>
        <TopClock>17 de jun&nbsp;&nbsp;11:18</TopClock>
        <TopRight>
          <Network size={16} />
          <Volume2 size={16} />
          <Power size={16} />
          <TopCaret />
        </TopRight>
      </TopBar>
      <DesktopBody>
        <Dock>
          <DockSlot $h={69} $running><Firefox /></DockSlot>
          <DockSlot $h={69}><Thunderbird /></DockSlot>
          <DockSlot $h={68} $running><FilesIcon /></DockSlot>
          <DockSlot $h={67}><SpeakerIcon /></DockSlot>
          <DockSlot $h={66}><WriterIcon /></DockSlot>
          <DockSlot $h={68}><StoreIcon /></DockSlot>
          <DockSlot $h={69}><HelpCircle>?</HelpCircle></DockSlot>
          <DockSlot $h={67} $running><MonitorIcon /></DockSlot>
          <DockSlot $h={69}><VsCodeIcon /></DockSlot>
          <DockSlot $h={68} $running><EditorIcon /></DockSlot>
          <DockSlot $h={63} $active $running><GearsIcon /></DockSlot>
          <AppGrid>
            {Array.from({ length: 9 }, (_, i) => <i key={i} />)}
          </AppGrid>
        </Dock>
        <Browser>
          <TabStrip>
            <FoxCell><Firefox size={18} /></FoxCell>
            <Tab $on>
              <TabIcon><FaGithub size={16} color="#222" /></TabIcon>
              <TabTitle>n-rincon4/Taller1_CSpace</TabTitle>
              <X size={14} />
            </Tab>
            <Tab>
              <TabIcon><D2L>D2L</D2L></TabIcon>
              <TabTitle>Taller1-EspacioDeConfiguración</TabTitle>
              <X size={14} />
            </Tab>
            <Tab>
              <TabIcon><D2L>D2L</D2L></TabIcon>
              <TabTitle>Calendario - Universidad Nacional</TabTitle>
              <X size={14} />
            </Tab>
            <Tab>
              <TabIcon />
              <TabTitle>
                <TabMain>Planner Arena</TabMain>
                <TabSub>REPRODUCCIÓN AUTOMÁTICA BLOQUEADA</TabSub>
              </TabTitle>
              <X size={14} />
            </Tab>
            <StripRight>
              <Plus size={18} />
              <StripControls>
                <Chevron><ChevronDown size={20} /></Chevron>
                <Minus size={14} />
                <Square size={10} />
                <BrowserClose><X size={14} /></BrowserClose>
              </StripControls>
            </StripRight>
          </TabStrip>
          <NavBar>
            <NavButtons>
              <NavIcon><ArrowLeft size={18} strokeWidth={1.5} /></NavIcon>
              <NavIcon $faded><ArrowRight size={18} strokeWidth={1.5} /></NavIcon>
              <NavIcon><RotateCw size={17} strokeWidth={1.5} /></NavIcon>
            </NavButtons>
            <AddressBar>
              <Shield size={17} strokeWidth={1.5} color="#222" />
              <Lock size={17} strokeWidth={1.5} color="#222" />
              <UrlText>https://<b>github.com</b>/n-rincon4/Taller1_CSpace/tree/main</UrlText>
              <Star size={18} strokeWidth={1.5} color="#222" />
            </AddressBar>
            <NavRight>
              <NavIcon><PocketIcon /></NavIcon>
              <NavIcon><CircleUser size={18} strokeWidth={1.5} /><BlueBadge /></NavIcon>
              <NavIcon><Puzzle size={18} strokeWidth={1.5} /></NavIcon>
              <NavIcon><Menu size={18} strokeWidth={1.5} /></NavIcon>
            </NavRight>
          </NavBar>
          <GhHeader>
            <FaGithub size={32} />
            <SearchBox>
              <GoSearch size={16} />
              <SearchText>Search or jump to...</SearchText>
              <SlashKey>/</SlashKey>
            </SearchBox>
            <GhLinks>
              <span>Pull requests</span>
              <span>Issues</span>
              <span>Codespaces</span>
              <span>Marketplace</span>
              <span>Explore</span>
            </GhLinks>
            <GhRight>
              <GoBell size={16} />
              <HeaderPlus><GoPlus size={16} /><GoTriangleDown size={14} /></HeaderPlus>
              <HeaderAvatar><Identicon size={20} /><GoTriangleDown size={14} /></HeaderAvatar>
            </GhRight>
          </GhHeader>
          <RepoHead>
            <RepoTitle>
              <RepoBook><GoRepo size={16} /></RepoBook>
              n-rincon4
              <Slash>/</Slash>
              <b>Taller1_CSpace</b>
              <PublicBadge>Public</PublicBadge>
              <RepoActions>
                <ActionBtn $w={67}><GoPin size={16} />Pin</ActionBtn>
                <ActionBtn $w={132}><GoEye size={16} />Unwatch<Counter>1</Counter><GoTriangleDown size={14} /></ActionBtn>
                <ActionBtn $w={132}>
                  <SplitMain><GoRepoForked size={16} />Fork<Counter>0</Counter></SplitMain>
                  <SplitCaret><GoTriangleDown size={14} /></SplitCaret>
                </ActionBtn>
                <ActionBtn $w={133} $ml={5}>
                  <SplitMain><GoStar size={16} />Star<Counter>0</Counter></SplitMain>
                  <SplitCaret><GoTriangleDown size={14} /></SplitCaret>
                </ActionBtn>
              </RepoActions>
            </RepoTitle>
            <RepoTabs>
              <RepoTab $w={83} $on><GoCode size={16} />Code</RepoTab>
              <RepoTab $w={93}><GoIssueOpened size={16} />Issues</RepoTab>
              <RepoTab $w={134}><GoGitPullRequest size={16} />Pull requests</RepoTab>
              <RepoTab $w={100}><GoPlay size={16} />Actions</RepoTab>
              <RepoTab $w={103}><GoTable size={16} />Projects</RepoTab>
              <RepoTab $w={78}><GoBook size={16} />Wiki</RepoTab>
              <RepoTab $w={102}><GoShield size={16} />Security</RepoTab>
              <RepoTab $w={102}><GoGraph size={16} />Insights</RepoTab>
              <RepoTab $w={100}><GoGear size={16} />Settings</RepoTab>
            </RepoTabs>
          </RepoHead>
          <RepoBody>
            <MainCol>
              <FileNav>
                <NavBtn $w={103}>
                  <MutedIcon><GoGitBranch size={16} /></MutedIcon>
                  main
                  <GoTriangleDown size={14} />
                </NavBtn>
                <NavCount $ml={16}><GoGitBranch size={16} /><span><b>1</b> branch</span></NavCount>
                <NavCount $ml={16}><GoTag size={16} /><span><b>0</b> tags</span></NavCount>
                <NavEnd>
                  <NavBtn $w={88}>Go to file</NavBtn>
                  <NavBtn $w={92}>Add file<GoTriangleDown size={14} /></NavBtn>
                  <NavBtn $w={99} $green><GoCode size={16} />Code<GoTriangleDown size={14} /></NavBtn>
                </NavEnd>
              </FileNav>
              <FileBox>
                <CommitRow>
                  <Identicon size={22} />
                  <CommitText><b>n-rincon4</b> Delete Data.txt</CommitText>
                  <CommitMeta>
                    4120a45
                    <CommitSum>now</CommitSum>
                    <Commits><GoHistory size={16} /><span><b>16</b> commits</span></Commits>
                  </CommitMeta>
                </CommitRow>
                {files.map((f, i) => (
                  <FileRow key={f.name} $hover={i === 0}>
                    <FileIcon $dir={f.dir}>{f.dir ? <GoFileDirectoryFill size={16} /> : <GoFile size={16} />}</FileIcon>
                    <FileName>{f.name}</FileName>
                    <FileMsg>{f.msg}</FileMsg>
                    <FileAge>{f.age}</FileAge>
                  </FileRow>
                ))}
              </FileBox>
              <ReadmeBox>
                <ReadmeHead>
                  README.md
                  <GoPencil size={16} />
                </ReadmeHead>
                <ReadmeTitle>Taller1_CSpace</ReadmeTitle>
              </ReadmeBox>
            </MainCol>
            <SideCol>
              <SideHeadRow>
                <SideTitle>About</SideTitle>
                <GoGear size={16} />
              </SideHeadRow>
              <AboutText>
                This repository holds the YAML files of six different Workspaces created to simulate the interaction between a robot and obstacles in its environment, converted into its C-Space representation.
              </AboutText>
              <MetaList>
                <MetaRow><MetaIcon><GoBook size={16} /></MetaIcon>Readme</MetaRow>
                <MetaRow><MetaIcon><GoPulse size={16} /></MetaIcon>Activity</MetaRow>
                <MetaRow><MetaIcon><GoStar size={16} /></MetaIcon><span><b>0</b> stars</span></MetaRow>
                <MetaRow><MetaIcon><GoEye size={16} /></MetaIcon><span><b>1</b> watching</span></MetaRow>
                <MetaRow><MetaIcon><GoRepoForked size={16} /></MetaIcon><span><b>0</b> forks</span></MetaRow>
              </MetaList>
              <SideRule $mt={21} />
              <SideTitle $mt={24}>Releases</SideTitle>
              <SideNote $mt={19}>No releases published</SideNote>
              <SideLink>Create a new release</SideLink>
              <SideRule $mt={25} />
              <SideTitle $mt={24}>Packages</SideTitle>
              <SideNote $mt={19}>No packages published</SideNote>
              <SideLink>Publish your first package</SideLink>
            </SideCol>
          </RepoBody>
        </Browser>
      </DesktopBody>
    </Desktop>
  </Screen>
);

export default App;
